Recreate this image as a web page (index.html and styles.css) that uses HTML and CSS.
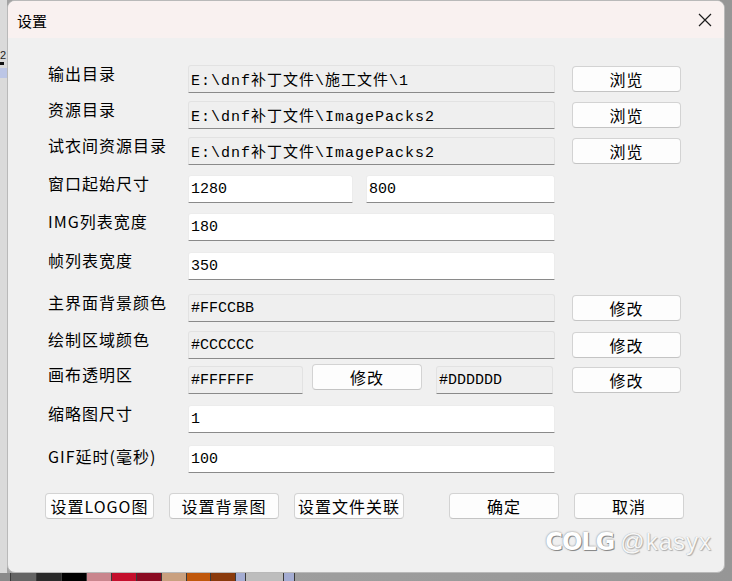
FILE: index.html
```html
<!DOCTYPE html>
<html lang="zh-CN">
<head>
  <meta charset="UTF-8">
  <title>设置</title>
  <link rel="stylesheet" href="styles.css">
</head>
<body>
  <div class="desk">
    <div class="edge">
      <span class="edge-num">2</span>
      <span class="edge-mark"></span>
      <span class="edge-sel"></span>
    </div>

    <div class="dialog">
      <div class="titlebar">
        <span class="title">设置</span>
        <svg class="close" width="14" height="14" viewBox="0 0 14 14">
          <path d="M1 1 L13 13 M13 1 L1 13" stroke="#1c1c1c" stroke-width="1.2" fill="none"/>
        </svg>
      </div>

      <div class="body">
        <div class="form">
          <label class="label">输出目录</label>
          <input class="field readonly path" type="text" readonly value="E:\dnf补丁文件\施工文件\1">
          <button class="btn side">浏览</button>

          <label class="label">资源目录</label>
          <input class="field readonly path" type="text" readonly value="E:\dnf补丁文件\ImagePacks2">
          <button class="btn side">浏览</button>

          <label class="label">试衣间资源目录</label>
          <input class="field readonly path" type="text" readonly value="E:\dnf补丁文件\ImagePacks2">
          <button class="btn side">浏览</button>

          <label class="label">窗口起始尺寸</label>
          <div class="pair">
            <input class="field w-165" type="text" value="1280">
            <input class="field w-189" type="text" value="800">
          </div>

          <label class="label">IMG列表宽度</label>
          <input class="field" type="text" value="180">

          <label class="label">帧列表宽度</label>
          <input class="field" type="text" value="350">

          <label class="label">主界面背景颜色</label>
          <input class="field readonly" type="text" readonly value="#FFCCBB">
          <button class="btn side">修改</button>

          <label class="label">绘制区域颜色</label>
          <input class="field readonly" type="text" readonly value="#CCCCCC">
          <button class="btn side">修改</button>

          <label class="label">画布透明区</label>
          <div class="canvas-group">
            <input class="field readonly w-115" type="text" readonly value="#FFFFFF">
            <button class="btn inline">修改</button>
            <input class="field readonly w-117" type="text" readonly value="#DDDDDD">
          </div>
          <button class="btn side">修改</button>

          <label class="label">缩略图尺寸</label>
          <input class="field" type="text" value="1">

          <label class="label label-low">GIF延时(毫秒)</label>
          <input class="field" type="text" value="100">
        </div>

        <div class="actions">
          <button class="btn">设置LOGO图</button>
          <button class="btn">设置背景图</button>
          <button class="btn">设置文件关联</button>
          <button class="btn ok">确定</button>
          <button class="btn">取消</button>
        </div>

        <div class="watermark">
          <span class="wm-logo">COLG</span>
          <span class="wm-user">@kasyx</span>
        </div>
      </div>
    </div>
  </div>

  <div class="swatches">
    <span class="sw" style="width:10px;background:#8a8a8a"></span>
    <span class="sw" style="width:25px;background:#646464"></span>
    <span class="sw" style="width:24px;background:#2a2a2a"></span>
    <span class="sw" style="width:24px;background:#000000"></span>
    <span class="sw" style="width:24px;background:#c9858d"></span>
    <span class="sw" style="width:24px;background:#c40f2c"></span>
    <span class="sw" style="width:24px;background:#8a0b22"></span>
    <span class="sw" style="width:24px;background:#c9a07f"></span>
    <span class="sw" style="width:23px;background:#c0580c"></span>
    <span class="sw" style="width:24px;background:#8a3a0c"></span>
    <span class="sw" style="width:9px;background:#a4acd2"></span>
    <span class="sw" style="width:37px;background:#bdbdbd"></span>
    <span class="sw" style="width:10px;background:#a4acd2"></span>
  </div>
</body>
</html>
```

FILE: styles.css
```css
body {
  margin: 0;
  width: 732px;
  height: 581px;
  overflow: hidden;
  background: linear-gradient(90deg, #a3a3a3, #969696);
  font-family: "Noto Sans CJK SC", "Noto Sans", sans-serif;
  color: #000;
}

.desk {
  display: flex;
  height: 573px;
}

/* strip of the window behind the dialog */
.edge {
  width: 7px;
  background: #dadada;
  position: relative;
  overflow: hidden;
}

.edge-num {
  position: absolute;
  left: 0;
  top: 49px;
  font-family: "Liberation Sans", sans-serif;
  font-size: 11px;
  line-height: 12px;
  color: #222;
}

.edge-mark {
  position: absolute;
  left: 0;
  top: 62px;
  width: 4px;
  height: 3px;
  background: #111;
}

.edge-sel {
  position: absolute;
  left: 0;
  top: 68px;
  width: 7px;
  height: 10px;
  background: #bcc6e6;
}

.dialog {
  width: 716px;
  height: 571px;
  background: #f0f0f0;
  border: 1px solid #b9b9b9;
  border-radius: 8px;
  overflow: hidden;
  display: flex;
  flex-direction: column;
}

.titlebar {
  height: 37px;
  flex-shrink: 0;
  background: #f9f1f0;
  display: flex;
  align-items: center;
  justify-content: space-between;
  padding: 0 12px 0 9px;
}

.title {
  font-size: 15px;
  margin-top: 1px;
}

.close {
  display: block;
  margin-top: 1px;
}

.body {
  flex: 1;
  position: relative;
  padding: 27px 0 0 40px;
}

.form {
  display: grid;
  grid-template-columns: 123px 367px 109px;
  grid-template-rows: 36px 36px 38px 38px 39px 42px 37px 35px 39px 40px 28px;
  column-gap: 17px;
  align-items: start;
}

.label {
  grid-column: 1;
  font-size: 16px;
  line-height: 22px;
  letter-spacing: 1px;
  margin-top: -3px;
  white-space: nowrap;
}

.label-low {
  margin-top: 0;
}

.field {
  box-sizing: border-box;
  width: 367px;
  height: 28px;
  margin: 0;
  padding: 0 2px;
  background: #fff;
  border: 1px solid #ececec;
  border-bottom: 1px solid #8a8a8a;
  border-radius: 3px 3px 0 0;
  font-family: "Liberation Mono", "Noto Sans CJK SC", monospace;
  font-size: 15px;
  color: #000;
  outline: none;
}

.field.readonly {
  background: #efefef;
  border-color: #e2e2e2;
  border-bottom-color: #8a8a8a;
}

.field.path {
  letter-spacing: 1px;
}

.pair {
  display: flex;
  justify-content: space-between;
  width: 367px;
}

.canvas-group {
  display: flex;
  width: 367px;
}

.w-165 { width: 165px; }
.w-189 { width: 189px; }
.w-115 { width: 115px; }
.w-117 { width: 117px; }

.btn {
  box-sizing: border-box;
  height: 26px;
  width: 110px;
  margin: 0;
  padding: 0;
  background: #fdfdfd;
  border: 1px solid #d3d3d3;
  border-bottom-color: #c4c4c4;
  border-radius: 4px;
  font-family: "Noto Sans CJK SC", "Noto Sans", sans-serif;
  font-size: 16px;
  letter-spacing: 1px;
  color: #000;
}

.btn.side {
  grid-column: 3;
  width: 109px;
  margin-top: 1px;
}

.btn.inline {
  margin: -2px 14px 0 9px;
}

.actions {
  display: flex;
  margin: 20px 0 0 -3px;
  gap: 15px;
}

.actions .btn:first-child {
  width: 109px;
}

.actions .ok {
  margin-left: 30px;
}

.watermark {
  position: absolute;
  right: 12px;
  bottom: 16px;
  display: flex;
  align-items: baseline;
  gap: 6px;
}

.wm-logo {
  font-family: "DejaVu Sans", sans-serif;
  font-weight: bold;
  font-size: 24px;
  color: #fff;
  letter-spacing: -1px;
  text-shadow: 1px 1px 0 #8a8a8a, 0 0 2px #777;
}

.wm-user {
  font-family: "Liberation Sans", sans-serif;
  font-size: 24px;
  letter-spacing: 1px;
  color: #f7f7f7;
  text-shadow: 0 0 1px #9a9a9a, 1px 1px 1px #b0b0b0;
}

.swatches {
  display: flex;
  height: 8px;
  gap: 1px;
  background: #3a3a3a;
  width: 295px;
}

.sw {
  display: block;
  height: 8px;
}
```
